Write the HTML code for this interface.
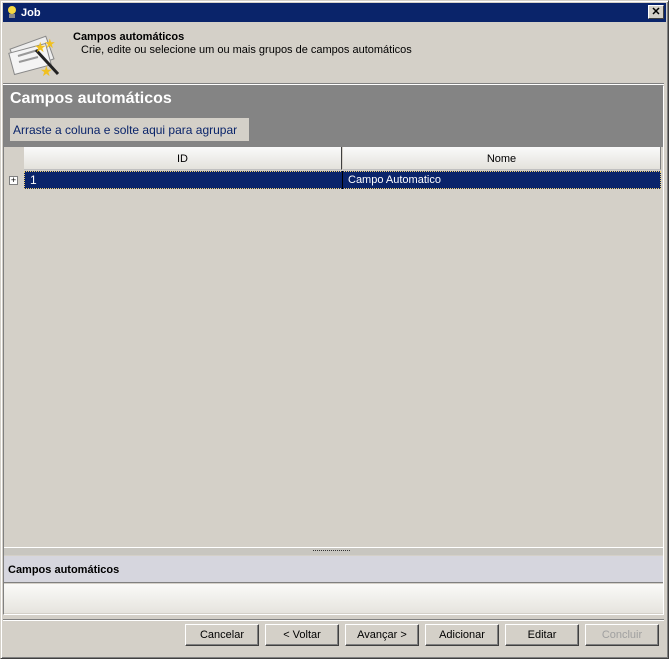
<!DOCTYPE html>
<html><head><meta charset="utf-8"><style>
*{box-sizing:border-box;margin:0;padding:0}
body{width:669px;height:659px;background:#d4d0c8;font-family:"Liberation Sans",sans-serif;font-size:11px;position:relative;overflow:hidden}
.abs{position:absolute}
.btn{position:absolute;top:624px;width:74px;height:22px;background:#d4d0c8;border:1px solid;border-color:#fff #404040 #404040 #fff;box-shadow:inset -1px -1px #808080;text-align:center;line-height:20px;font-size:11px;color:#000}
</style></head><body>
<div class="abs" style="left:0;top:0;width:669px;height:659px;border:1px solid;border-color:#d4d0c8 #404040 #404040 #d4d0c8;box-shadow:inset 1px 1px #fff,inset -1px -1px #808080"></div>
<div class="abs" style="left:3px;top:3px;width:663px;height:19px;background:#0a246a"></div>
<div class="abs" style="left:6px;top:5px;width:12px;height:14px"><svg width="12" height="14"><circle cx="6" cy="5" r="4" fill="#f5d840"/><rect x="3" y="9" width="6" height="4" fill="#8a8a8a"/></svg></div>
<div class="abs" style="left:21px;top:7px;color:#fff;font-weight:bold;font-size:11px">Job</div>
<div class="abs" style="left:648px;top:5px;width:16px;height:14px;background:#d4d0c8;border:1px solid;border-color:#fff #404040 #404040 #fff;font-size:11px;font-weight:bold;text-align:center;line-height:12px">✕</div>
<svg class="abs" style="left:8px;top:28px" width="52" height="50"><rect x="5" y="14" width="38" height="24" fill="#eee" stroke="#888" transform="rotate(-20 24 26)"/><rect x="3" y="20" width="38" height="22" fill="#f4f4f4" stroke="#888" transform="rotate(-15 22 31)"/><line x1="10" y1="28" x2="30" y2="22" stroke="#999" stroke-width="2"/><line x1="11" y1="34" x2="30" y2="29" stroke="#999" stroke-width="2"/><line x1="28" y1="22" x2="50" y2="46" stroke="#222" stroke-width="3"/><text x="26" y="24" font-size="14" fill="#f0c020">★</text><text x="32" y="48" font-size="14" fill="#f0c020">★</text><text x="36" y="20" font-size="13" fill="#f0c020">★</text></svg>
<div class="abs" style="left:73px;top:31px;font-weight:bold;font-size:11px">Campos automáticos</div>
<div class="abs" style="left:81px;top:44px;font-size:11px">Crie, edite ou selecione um ou mais grupos de campos automáticos</div>
<div class="abs" style="left:3px;top:83px;width:661px;height:1px;background:#808080"></div>
<div class="abs" style="left:3px;top:84px;width:661px;height:1px;background:#fff"></div>
<div class="abs" style="left:3px;top:85px;width:661px;height:530px;border:1px solid;border-color:#808080 #fff #fff #808080"></div>
<div class="abs" style="left:4px;top:85px;width:659px;height:62px;background:#848484"></div>
<div class="abs" style="left:10px;top:90px;color:#fff;font-weight:bold;font-size:16px">Campos automáticos</div>
<div class="abs" style="left:10px;top:118px;width:239px;height:23px;background:#d4d0c8;color:#0a246a;font-size:12px;line-height:25px;padding-left:3px">Arraste a coluna e solte aqui para agrupar</div>
<div class="abs" style="left:24px;top:147px;width:318px;height:23px;background:linear-gradient(#fafafa,#e4e2dc);border-right:1px solid #404040;border-bottom:1px solid #c0c0c0;text-align:center;line-height:24px;font-size:11px">ID</div>
<div class="abs" style="left:343px;top:147px;width:318px;height:23px;background:linear-gradient(#fafafa,#e4e2dc);border-right:1px solid #808080;border-bottom:1px solid #c0c0c0;text-align:center;line-height:24px;font-size:11px">Nome</div>
<div class="abs" style="left:24px;top:171px;width:637px;height:18px;background:#0a246a;border:1px dotted #f0d070"></div>
<div class="abs" style="left:342px;top:171px;width:1px;height:18px;background:#000"></div>
<div class="abs" style="left:30px;top:173px;color:#fff;font-size:12px">1</div>
<div class="abs" style="left:348px;top:174px;color:#fff;font-size:11px">Campo Automatico</div>
<div class="abs" style="left:9px;top:176px;width:9px;height:9px;border:1px solid #808080;background:#fff;font-size:9px;line-height:7px;text-align:center">+</div>
<div class="abs" style="left:4px;top:547px;width:659px;height:8px;background:#c8c6c0;border-top:1px solid #fff"></div>
<div class="abs" style="left:313px;top:550px;width:37px;height:1px;border-top:1px dotted #333"></div>
<div class="abs" style="left:4px;top:556px;width:659px;height:27px;background:#d6d6de;border-bottom:1px solid #808080;font-weight:bold;font-size:11px;line-height:28px;padding-left:4px">Campos automáticos</div>
<div class="abs" style="left:4px;top:584px;width:659px;height:29px;background:linear-gradient(#fafaf8,#e6e4de)"></div>
<div class="abs" style="left:3px;top:619px;width:661px;height:1px;background:#808080"></div>
<div class="abs" style="left:3px;top:620px;width:661px;height:1px;background:#fff"></div>
<div class="btn" style="left:185px">Cancelar</div>
<div class="btn" style="left:265px">&lt; Voltar</div>
<div class="btn" style="left:345px">Avançar &gt;</div>
<div class="btn" style="left:425px">Adicionar</div>
<div class="btn" style="left:505px">Editar</div>
<div class="btn" style="left:585px;color:#a0a0a0">Concluir</div>
</body></html>
